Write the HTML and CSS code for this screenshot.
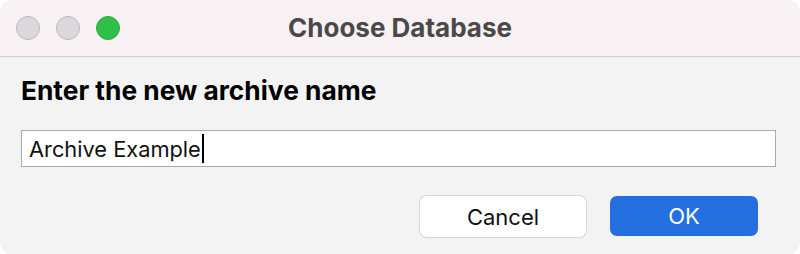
FILE: index.html
```html
<!DOCTYPE html>
<html lang="en">
<head>
    <meta charset="UTF-8">
    <title>Choose Database</title>
    <link rel="stylesheet" href="styles.css">
</head>
<body>

<div class="window">
    <div class="titlebar">
        <div class="lights">
            <span class="light"></span>
            <span class="light"></span>
            <span class="light green"></span>
        </div>
        <div class="title">Choose Database</div>
    </div>
    <div class="content">
        <div class="prompt">Enter the new archive name</div>
        <div class="field">Archive Example<span class="caret"></span></div>
        <div class="buttons">
            <button class="btn cancel">Cancel</button>
            <button class="btn ok">OK</button>
        </div>
    </div>
</div>

</body>
</html>
```

FILE: styles.css
```css
body {
    margin: 0;
    background: #ffffff;
    font-family: Inter, "Liberation Sans", Arial, sans-serif;
}
.window {
    width: 800px;
    height: 254px;
    box-sizing: border-box;
    border-radius: 12px;
    overflow: hidden;
    background: #f3f3f3;
    display: flex;
    flex-direction: column;
}
.titlebar {
    position: relative;
    height: 56px;
    background: #f7f1f4;
    border-bottom: 1px solid #cfcccd;
    display: flex;
    align-items: center;
    justify-content: center;
}
.lights {
    position: absolute;
    left: 16px;
    top: 16px;
    display: flex;
    gap: 16px;
}
.light {
    width: 22px;
    height: 22px;
    border-radius: 50%;
    background: #dcd7da;
    border: 1px solid #bdb9bb;
}
.light.green {
    background: #2fc04a;
    border-color: #2aae42;
}
.title {
    font-size: 26px;
    font-weight: bold;
    color: #4a4849;
    line-height: 32px;
}
.content {
    padding: 18px 24px 0 21px;
}
.prompt {
    font-size: 26.3px;
    font-weight: bold;
    color: #000;
    line-height: 32px;
}
.field {
    margin-top: 23px;
    height: 35px;
    border: 1px solid #aaaaaa;
    background: #fff;
    font-size: 21.8px;
    padding-left: 7px;
    display: flex;
    align-items: center;
    color: #111;
}
.caret {
    display: inline-block;
    width: 2px;
    height: 29px;
    margin-left: 1px;
    background: #000;
}
.buttons {
    margin-top: 29px;
    display: flex;
    justify-content: flex-end;
    gap: 24px;
    padding-right: 18px;
}
.btn {
    font-family: inherit;
    font-size: 22px;
    height: 41px;
    border-radius: 7px;
    border: none;
}
.cancel {
    width: 166px;
    background: #fff;
    color: #111;
    box-shadow: 0 0 0 1px #d8d8d8, 0 1px 1px rgba(0,0,0,0.15);
}
.ok {
    width: 148px;
    height: 40px;
    background: #2570e0;
    color: #fff;
}
```
